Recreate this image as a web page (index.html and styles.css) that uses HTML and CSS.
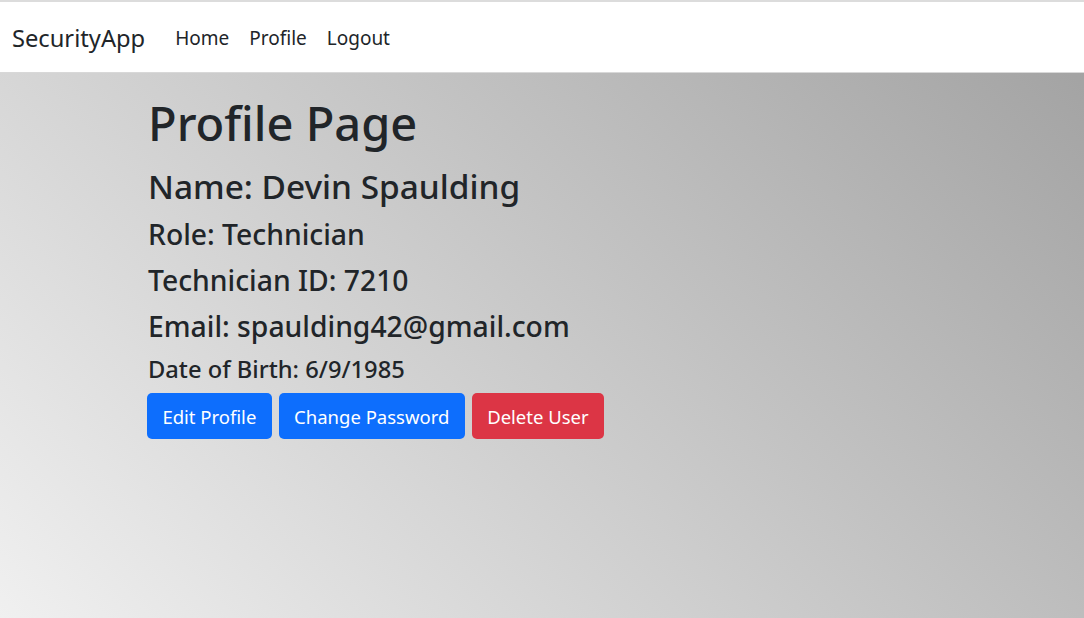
FILE: index.html
```html
<!DOCTYPE html>
<html lang="en">
<head>
<meta charset="utf-8">
<title>Profile - SecurityApp</title>
<link rel="stylesheet" href="styles.css">
</head>
<body>
<div class="page">
  <nav class="navbar">
    <a class="brand" href="#">SecurityApp</a>
    <ul class="nav-links">
      <li><a href="#">Home</a></li>
      <li><a href="#">Profile</a></li>
      <li><a href="#">Logout</a></li>
    </ul>
  </nav>
  <main class="content">
    <h1 class="title">Profile Page</h1>
    <h2 class="name">Name: Devin Spaulding</h2>
    <h3 class="field">Role: Technician</h3>
    <h3 class="field">Technician ID: 7210</h3>
    <h3 class="field">Email: spaulding42@gmail.com</h3>
    <h4 class="dob">Date of Birth: 6/9/1985</h4>
    <div class="actions">
      <button class="btn btn-primary">Edit Profile</button>
      <button class="btn btn-primary">Change Password</button>
      <button class="btn btn-danger">Delete User</button>
    </div>
  </main>
</div>
</body>
</html>
```
FILE: styles.css
```css
* { box-sizing: border-box; }
html, body { margin: 0; padding: 0; }
body {
  font-family: "Noto Sans", "Open Sans", sans-serif;
  color: #212529;
}
.page {
  min-height: 100vh;
  background: linear-gradient(45deg, #f0f0f0, #a0a0a0);
}
.navbar {
  display: flex;
  align-items: center;
  height: 73px;
  padding: 2px 12px 0;
  background: #fff;
  border-top: 2px solid #dcdcdc;
  border-bottom: 1px solid #d8d8d8;
}
.brand {
  font-size: 23.7px;
  color: #212529;
  text-decoration: none;
  margin-right: 30px;
}
.nav-links {
  display: flex;
  list-style: none;
  margin: 0;
  padding: 0;
  gap: 20px;
}
.nav-links a {
  font-size: 19px;
  color: #212529;
  text-decoration: none;
}
.content {
  padding: 20px 0 0 148px;
}
.content h1, .content h2, .content h3, .content h4 {
  margin: 0;
  font-weight: 500;
}
.title { font-size: 47px; line-height: 60px; margin-bottom: 8px !important; }
.name { font-size: 33.4px; line-height: 50px; }
.field { font-size: 28.3px; line-height: 46px; }
.dob { font-size: 23.7px; line-height: 40px; }
.actions {
  display: flex;
  gap: 7px;
  margin-top: 4px;
  margin-left: -1px;
}
.btn {
  height: 46px;
  padding: 0 15.4px;
  border: none;
  border-radius: 5px;
  font-family: inherit;
  font-size: 18.5px;
  color: #fff;
}
.btn-primary { background: #0d6efd; }
.btn-danger { background: #dc3545; }
```
